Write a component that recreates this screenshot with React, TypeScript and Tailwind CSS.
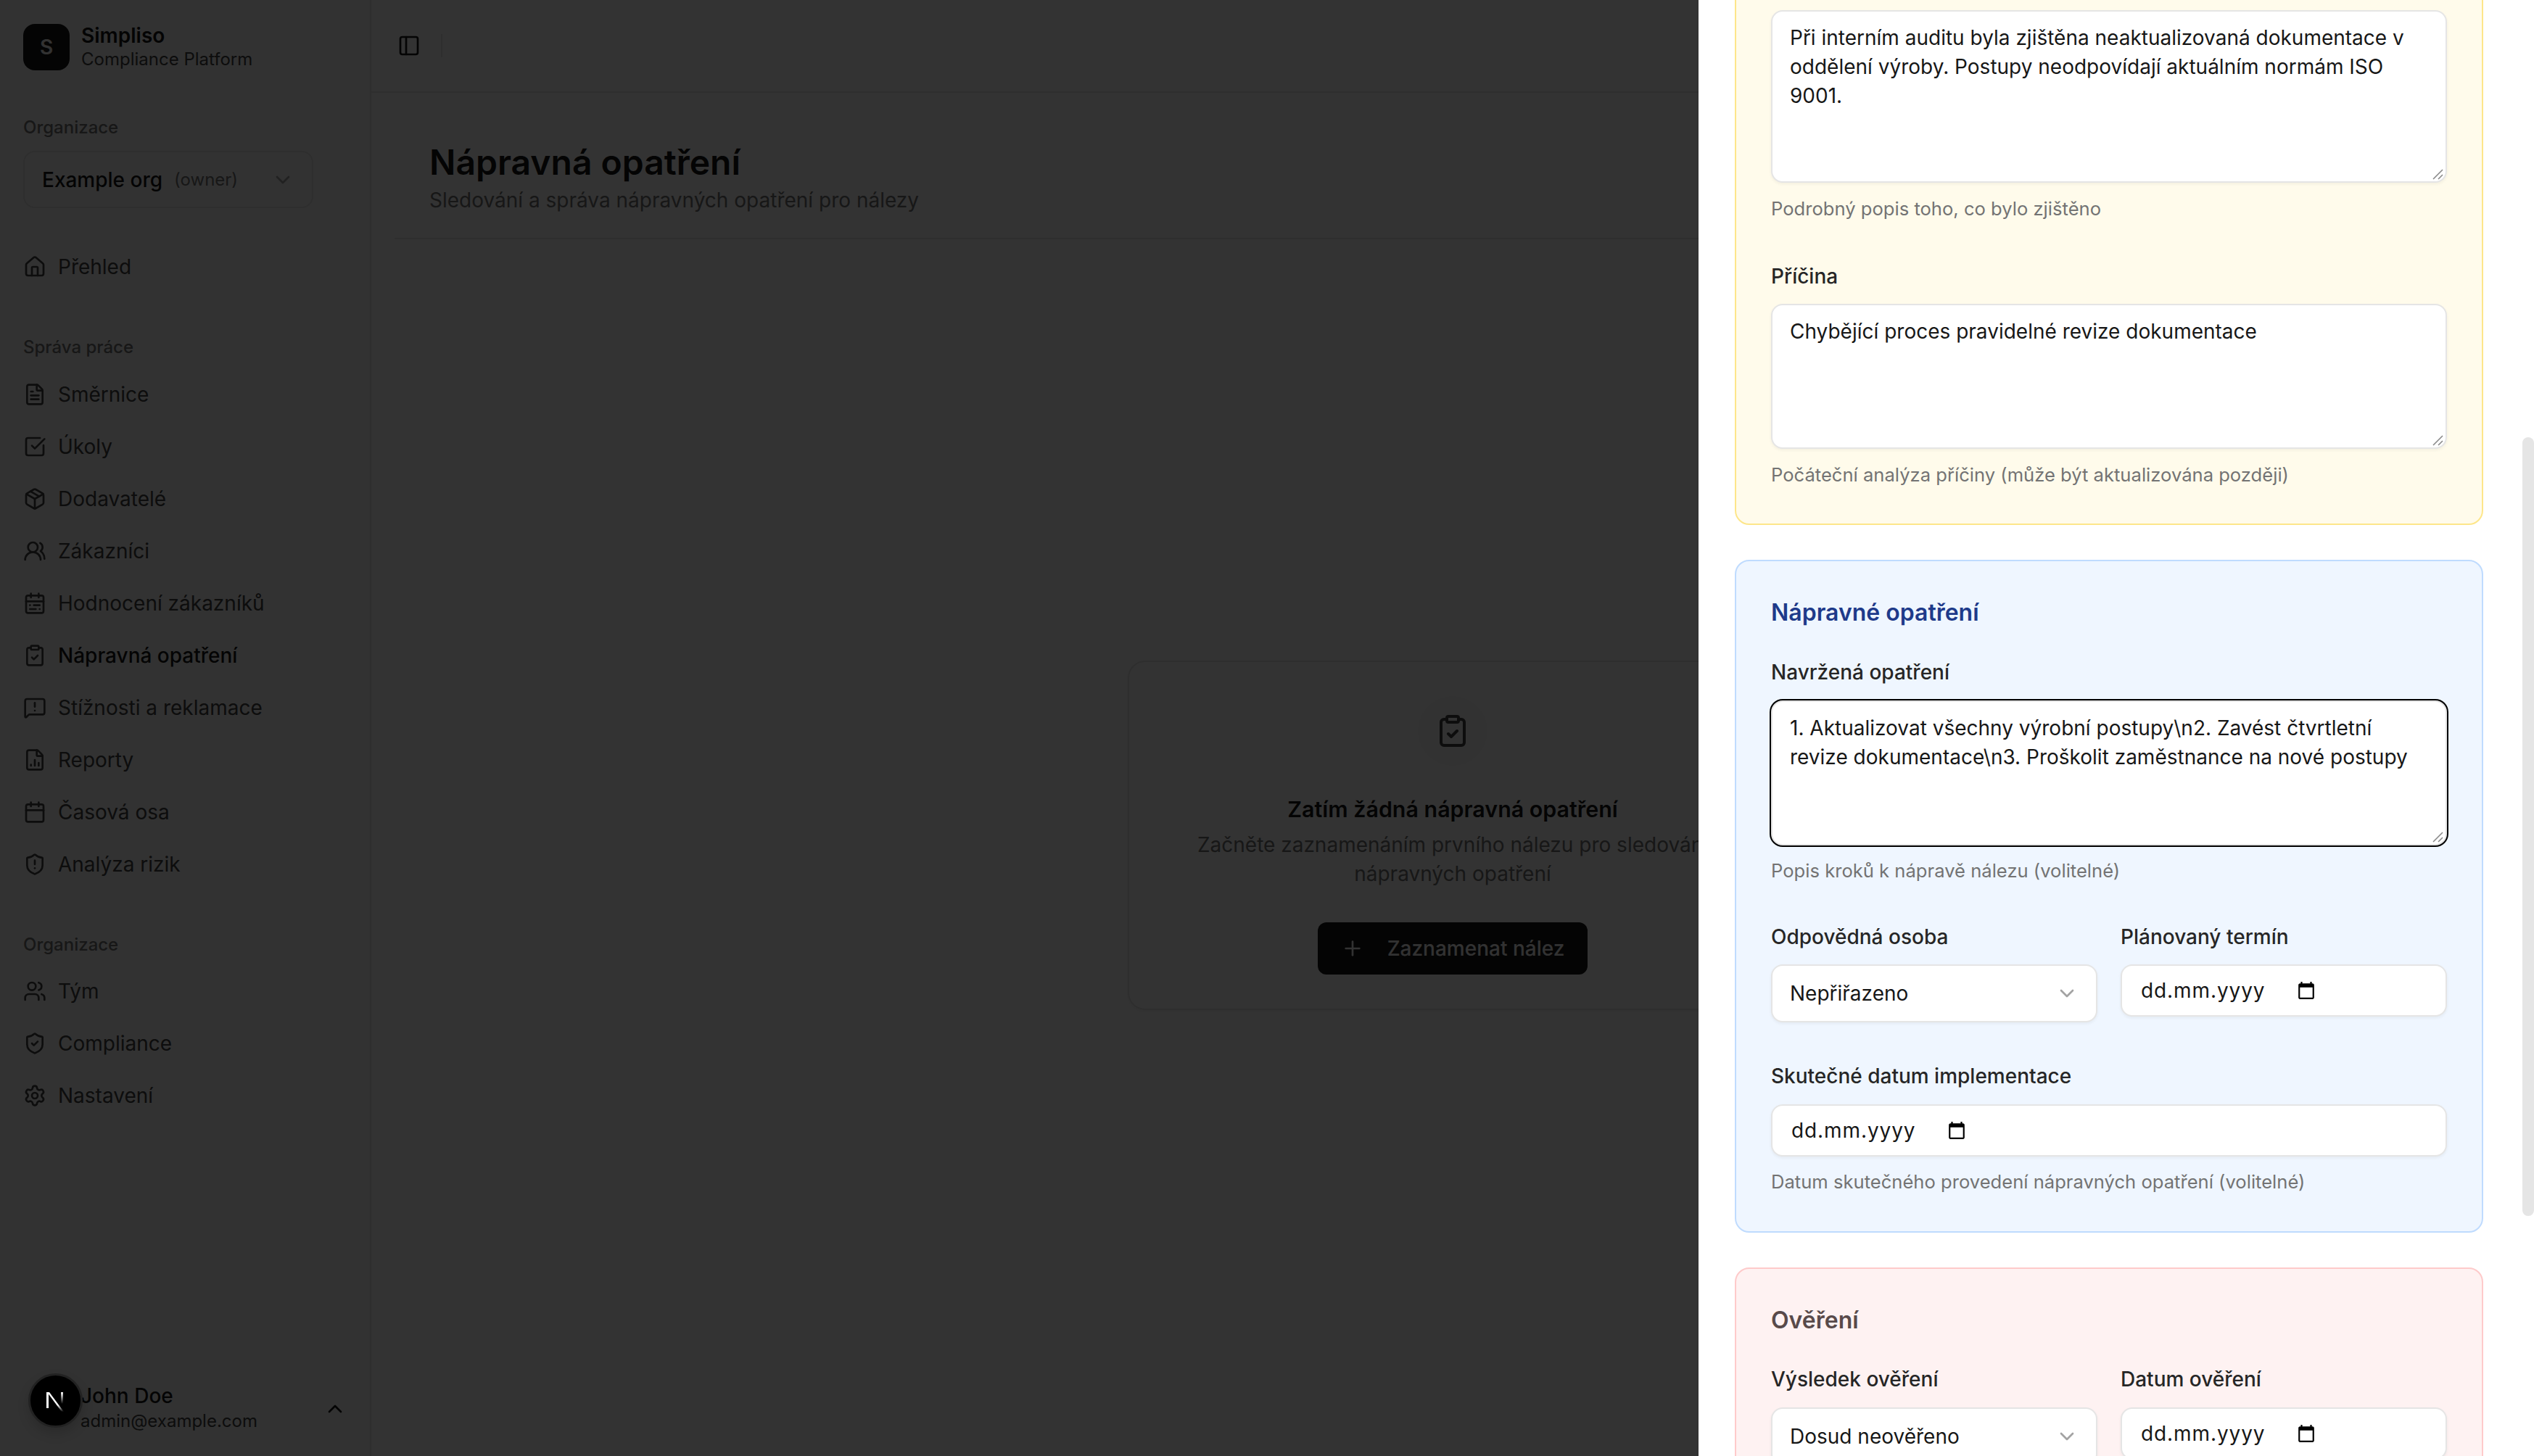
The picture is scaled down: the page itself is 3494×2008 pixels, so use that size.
import React from "react";
import {
  House, FileText, SquareCheckBig, Package, UsersRound, CalendarRange, ClipboardCheck,
  MessageSquareWarning, FileChartColumn, Calendar, ShieldAlert, Users, ShieldCheck, Settings,
  ChevronDown, ChevronUp, PanelLeft, Plus,
} from "lucide-react";

type NavItem = { label: string; icon: React.ComponentType<any>; active?: boolean };

const work: NavItem[] = [
  { label: "Směrnice", icon: FileText },
  { label: "Úkoly", icon: SquareCheckBig },
  { label: "Dodavatelé", icon: Package },
  { label: "Zákazníci", icon: UsersRound },
  { label: "Hodnocení zákazníků", icon: CalendarRange },
  { label: "Nápravná opatření", icon: ClipboardCheck, active: true },
  { label: "Stížnosti a reklamace", icon: MessageSquareWarning },
  { label: "Reporty", icon: FileChartColumn },
  { label: "Časová osa", icon: Calendar },
  { label: "Analýza rizik", icon: ShieldAlert },
];
const org: NavItem[] = [
  { label: "Tým", icon: Users },
  { label: "Compliance", icon: ShieldCheck },
  { label: "Nastavení", icon: Settings },
];

function NavRow({ item }: { item: NavItem }) {
  const Icon = item.icon;
  return (
    <div className="flex h-[64px] items-center gap-4 mb-2">
      <Icon size={32} strokeWidth={2} className="shrink-0 text-[#404040]" />
      <span className={item.active ? "text-[28px] font-medium text-[#171717]" : "text-[28px] text-[#404040]"}>{item.label}</span>
    </div>
  );
}

function GroupLabel({ children }: { children: React.ReactNode }) {
  return <div className="h-[32px] text-[24px] leading-[32px] font-medium text-[#737373]">{children}</div>;
}

function Sidebar() {
  return (
    <aside className="flex h-full w-[512px] shrink-0 flex-col justify-between border-r-2 border-[#e5e5e5] bg-[#fafafa] pl-8 pr-[78px]">
      <div>
        <div className="mt-8 flex items-center gap-4">
          <div className="flex h-[64px] w-[64px] items-center justify-center rounded-2xl bg-[#171717] text-[28px] font-semibold text-[#fafafa]">S</div>
          <div className="flex flex-col">
            <span className="text-[28px] leading-[34px] font-semibold text-[#171717]">Simpliso</span>
            <span className="text-[24px] leading-[32px] text-[#404040]">Compliance Platform</span>
          </div>
        </div>
        <div className="mt-[62px]"><GroupLabel>Organizace</GroupLabel></div>
        <div className="mt-[16px] flex h-[79px] w-[400px] items-center rounded-2xl border-2 border-[#e5e5e5] pl-6 pr-8">
          <span className="text-[28px] font-medium text-[#171717]">Example org</span>
          <span className="ml-4 text-[24px] text-[#737373]">(owner)</span>
          <ChevronDown size={32} className="ml-auto -mr-2 text-[#a3a3a3]" />
        </div>
        <div className="mt-[49px]"><NavRow item={{ label: "Přehled", icon: House }} /></div>
        <div className="mt-[63px]"><GroupLabel>Správa práce</GroupLabel></div>
        <div className="mt-[17px]">{work.map((i) => <NavRow key={i.label} item={i} />)}</div>
        <div className="mt-[63px]"><GroupLabel>Organizace</GroupLabel></div>
        <div className="mt-[16px]">{org.map((i) => <NavRow key={i.label} item={i} />)}</div>
      </div>
      <div className="flex items-center pb-[31px] pl-[79px] -mr-[46px]">
        <div className="flex flex-col">
          <span className="text-[28px] leading-[36px] font-medium text-[#171717]">John Doe</span>
          <span className="text-[24px] leading-[34px] text-[#404040]">admin@example.com</span>
        </div>
        <ChevronUp size={32} className="ml-auto mt-[2px] text-[#171717]" />
      </div>
    </aside>
  );
}

function Main() {
  return (
    <main className="flex h-full min-w-0 flex-1 flex-col bg-white">
      <header className="flex h-[128px] items-center gap-[28px] border-b-2 border-[#e5e5e5] pl-[36px]">
        <PanelLeft size={32} className="text-[#171717]" />
        <div className="h-[32px] w-[2px] bg-[#e5e5e5]" />
      </header>
      <div className="mx-8 border-b-2 border-[#e5e5e5] pb-[32px] pl-[48px] pt-[64px]">
        <h1 className="text-[48px] leading-[64px] font-semibold text-[#171717]">Nápravná opatření</h1>
        <p className="text-[28px] leading-[40px] text-[#737373]">Sledování a správa nápravných opatření pro nálezy</p>
      </div>
      <div className="mt-[581px] flex justify-center">
        <div className="flex h-[482px] w-[896px] flex-col items-center rounded-3xl border-2 border-[#e5e5e5] pt-[47px] shadow-[0_2px_4px_rgba(0,0,0,0.05)]">
          <div className="flex h-[96px] w-[96px] items-center justify-center rounded-full bg-[#fafafa]">
            <ClipboardCheck size={48} className="text-[#404040]" />
          </div>
          <h3 className="mt-[38px] text-[30.4px] leading-[44px] font-semibold text-[#171717]">Zatím žádná nápravná opatření</h3>
          <p className="mt-[7px] text-center text-[28px] leading-[40px] text-[#737373]">
            Začněte zaznamenáním prvního nálezu pro sledování<br />nápravných opatření
          </p>
          <div className="mt-[47px] flex h-[72px] items-center gap-[32px] rounded-xl bg-[#171717] px-[32px] text-[28px] font-medium text-[#fafafa]">
            <Plus size={32} />
            <span>Zaznamenat nález</span>
          </div>
        </div>
      </div>
    </main>
  );
}

function Help({ children, mt = "mt-[19px]" }: { children: React.ReactNode; mt?: string }) {
  return <p className={`${mt} text-[25.6px] leading-[32px] text-[#737373]`}>{children}</p>;
}

function Label({ children }: { children: React.ReactNode }) {
  return <div className="text-[28px] leading-[28px] font-medium text-[#262626]">{children}</div>;
}

function DateField({ className = "" }: { className?: string }) {
  return (
    <div className={`flex items-center rounded-2xl border-2 border-[#e5e5e5] bg-white pl-[26px] text-[28px] text-[#171717] shadow-[0_2px_4px_rgba(0,0,0,0.05)] ${className}`}>
      <span className="tracking-[0.9px]">dd.mm.yyyy</span>
      <svg width="26" height="26" viewBox="0 0 24 24" className="ml-[44px]" fill="#000">
        <path d="M20 3h-1V1h-2v2H7V1H5v2H4c-1.1 0-2 .9-2 2v16c0 1.1.9 2 2 2h16c1.1 0 2-.9 2-2V5c0-1.1-.9-2-2-2zm0 18H4V8h16v13z" />
      </svg>
    </div>
  );
}

function SelectField({ value }: { value: string }) {
  return (
    <div className="flex h-[80px] items-center justify-between rounded-2xl border-2 border-[#e5e5e5] bg-white pl-[24px] pr-[24px] text-[28px] text-[#171717] shadow-[0_2px_4px_rgba(0,0,0,0.05)]">
      <span>{value}</span>
      <ChevronDown size={32} className="text-[#a3a3a3]" />
    </div>
  );
}

function Area({ value, h, focus }: { value: string; h: string; focus?: boolean }) {
  return (
    <div className="relative">
      <textarea
        readOnly
        defaultValue={value}
        className={`block w-full ${h} resize-none rounded-2xl border-2 border-[#e5e5e5] bg-white px-[24px] py-[16px] text-[28px] leading-[40px] text-[#171717] outline-none ${focus ? "shadow-[0_0_0_2px_#000]" : "shadow-[0_2px_4px_rgba(0,0,0,0.05)]"}`}
      />
      <svg width="16" height="16" viewBox="0 0 16 16" className="absolute bottom-[4px] right-[4px]" stroke="#8a8a8a" strokeWidth="1.6" fill="none">
        <path d="M1 15 L14 2 M8 15 L14 9" />
      </svg>
    </div>
  );
}

function Sheet() {
  return (
    <div className="absolute bottom-0 right-0 top-0 w-[1152px] overflow-hidden bg-white">
      <div className="ml-[50px] w-[1032px]">
        <section className="-mt-[40px] rounded-[20px] border-2 border-[#fde68a] bg-[#fffbeb] px-[48px] pb-[51px] pt-[52px]">
          <Area h="h-[238px]" value="Při interním auditu byla zjištěna neaktualizovaná dokumentace v oddělení výroby. Postupy neodpovídají aktuálním normám ISO 9001." />
          <Help mt="mt-[20px]">Podrobný popis toho, co bylo zjištěno</Help>
          <div className="mt-[63px]"><Label>Příčina</Label></div>
          <div className="mt-[24px]"><Area h="h-[200px]" value="Chybějící proces pravidelné revize dokumentace" /></div>
          <Help mt="mt-[20px]">Počáteční analýza příčiny (může být aktualizována později)</Help>
        </section>

        <section className="mt-[48px] rounded-[20px] border-2 border-[#bfdbfe] bg-[#eff6ff] px-[48px] pb-[52px] pt-[47px]">
          <h3 className="text-[32px] leading-[48px] font-semibold text-[#1e3a8a]">Nápravné opatření</h3>
          <div className="mt-[44px]"><Label>Navržená opatření</Label></div>
          <div className="mt-[25px]"><Area focus h="h-[200px]" value="1. Aktualizovat všechny výrobní postupy\n2. Zavést čtvrtletní revize dokumentace\n3. Proškolit zaměstnance na nové postupy" /></div>
          <Help>Popis kroků k nápravě nálezu (volitelné)</Help>
          <div className="mt-[61px] grid grid-cols-2 gap-x-8">
            <div>
              <Label>Odpovědná osoba</Label>
              <div className="mt-[24px]"><SelectField value="Nepřiřazeno" /></div>
            </div>
            <div>
              <Label>Plánovaný termín</Label>
              <DateField className="mt-[24px] h-[72px]" />
            </div>
          </div>
          <div className="mt-[60px]"><Label>Skutečné datum implementace</Label></div>
          <DateField className="mt-[25px] h-[72px]" />
          <Help>Datum skutečného provedení nápravných opatření (volitelné)</Help>
        </section>

        <section className="mt-[48px] rounded-[20px] border-2 border-[#fecaca] bg-[#fef2f2] px-[48px] pt-[47px] pb-[48px]">
          <h3 className="text-[32px] leading-[48px] font-semibold text-[#584a4a]">Ověření</h3>
          <div className="mt-[43px] grid grid-cols-2 gap-x-8">
            <div>
              <Label>Výsledek ověření</Label>
              <div className="mt-[25px]"><SelectField value="Dosud neověřeno" /></div>
            </div>
            <div>
              <Label>Datum ověření</Label>
              <DateField className="mt-[25px] h-[72px]" />
            </div>
          </div>
        </section>
      </div>
      <div className="absolute right-0 top-[603px] h-[1074px] w-[16px] rounded-full bg-[#e5e5e5]" />
    </div>
  );
}

function DevBadge() {
  return (
    <div className="absolute left-[39px] top-[1894px] flex h-[75px] w-[75px] items-center justify-center rounded-full border-[3px] border-[#222222] bg-black shadow-[0_8px_16px_rgba(0,0,0,0.15)]">
      <svg width="32" height="36" viewBox="0 0 32 36" fill="none">
        <defs>
          <linearGradient id="nfade" x1="0" y1="0" x2="0" y2="1">
            <stop offset="0" stopColor="#fff" />
            <stop offset="0.65" stopColor="#fff" />
            <stop offset="1" stopColor="#fff" stopOpacity="0" />
          </linearGradient>
          <linearGradient id="nfade2" x1="0" y1="0" x2="0" y2="1">
            <stop offset="0" stopColor="#fff" />
            <stop offset="1" stopColor="#fff" stopOpacity="0" />
          </linearGradient>
        </defs>
        <rect x="3" y="6" width="3" height="22" fill="#fff" />
        <path d="M4 6 L7 6 L27 33 L24 33 Z" fill="url(#nfade)" />
        <rect x="23" y="6" width="3" height="16" fill="url(#nfade2)" />
      </svg>
    </div>
  );
}

export default function App() {
  return (
    <div className="relative flex h-screen w-screen overflow-hidden bg-white [font-family:Inter,sans-serif]">
      <Sidebar />
      <Main />
      <div className="absolute inset-0 bg-black/80" />
      <Sheet />
      <DevBadge />
    </div>
  );
}
